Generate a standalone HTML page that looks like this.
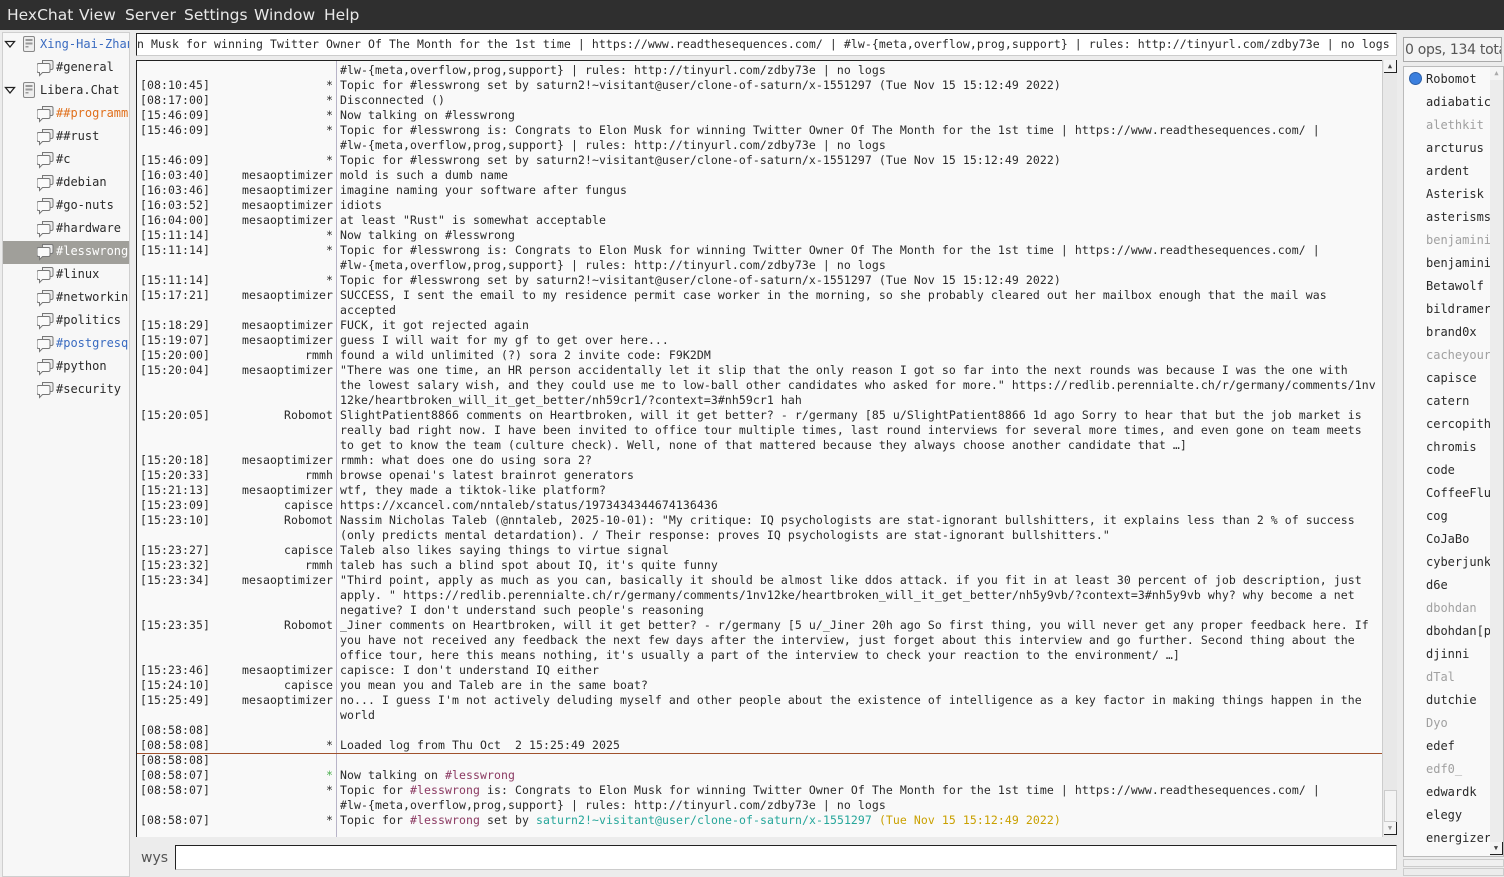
<!DOCTYPE html>
<html><head><meta charset="utf-8">
<style>
*{margin:0;padding:0;box-sizing:border-box}
body{width:1504px;height:877px;background:#ececec;position:relative;overflow:hidden;font-family:"DejaVu Sans Mono","Liberation Mono",monospace;font-size:11.5px;color:#2a2a2a}
.abs{position:absolute}
#menu{left:0;top:0;width:1504px;height:30px;background:#2f2f2f;color:#e8e8e8;font-family:"DejaVu Sans","Liberation Sans",sans-serif;font-size:15.5px;}
#menu span{position:absolute;top:6px}
#tree{left:2px;top:32px;width:128px;height:845px;background:#f7f7f7;border:1px solid #cfcfcf;overflow:hidden}
.ti{position:absolute;height:23px;line-height:23px;white-space:nowrap;font-size:12px}
.ic{position:absolute}
#topic{left:136px;top:33px;width:1261px;height:23px;background:#fff;border:1px solid #222;border-right-color:#ccc;border-bottom-color:#ccc;line-height:21px;white-space:nowrap;overflow:hidden;letter-spacing:0.075px}
#chat{left:136px;top:60px;width:1261px;height:777px;background:#f9f9f9;border:1px solid #222;border-right:none;border-bottom:none;overflow:hidden}
.ln{position:absolute;height:15px;line-height:15px;white-space:pre;letter-spacing:0.075px}
.t{left:3px}
.n{width:196px;left:0;text-align:right}
.m{left:203px}
#sep{left:199px;top:0;width:1px;height:777px;background:#b8b4c8}
#sb{left:1382px;top:60px;width:15px;height:777px;background:#e8e8e8;border-left:1px solid #ccc}
#ulhead{left:1403px;top:37px;width:99px;height:25px;background:#f3f3f3;border:1px solid #aaa;font-family:"DejaVu Sans",sans-serif;font-size:14px;letter-spacing:-0.3px;line-height:24px;color:#555;white-space:nowrap;overflow:hidden;padding-left:1px}
#ul{left:1403px;top:66px;width:101px;height:791px;background:#f9f9f9;border:1px solid #bbb;overflow:hidden;font-size:12px}
.u{position:absolute;left:22px;height:23px;line-height:23px;white-space:nowrap}
.g{color:#a0a0a0}
.p{color:#8b3a62}
</style></head><body>
<div id="menu" class="abs"><span style="left:7px">HexChat</span><span style="left:79px">View</span><span style="left:125px">Server</span><span style="left:184px">Settings</span><span style="left:254px">Window</span><span style="left:324px">Help</span></div>

<svg width="0" height="0" style="position:absolute">
<defs>
<g id="tri"><path d="M1.5 2.5 L10.5 2.5 L6 8 Z" fill="#fff" stroke="#222" stroke-width="1.3"/></g>
<g id="srv"><rect x="1.5" y="0.5" width="11" height="15" rx="1.5" fill="#eee" stroke="#888"/><rect x="3.5" y="3" width="7" height="2" fill="#999"/><rect x="3.5" y="6.5" width="7" height="2" fill="#999"/><rect x="3.5" y="10" width="3" height="1.5" fill="#999"/></g>
<g id="bub"><path d="M5.5 1.5 h9 a1.5 1.5 0 0 1 1.5 1.5 v6 a1.5 1.5 0 0 1 -1.5 1.5 h-9 z" fill="#eee" stroke="#777"/><path d="M1.5 4.5 h10 a1.5 1.5 0 0 1 1.5 1.5 v6 a1.5 1.5 0 0 1 -1.5 1.5 h-6 l-3 3 v-3 h-1 a1.5 1.5 0 0 1 -1.5 -1.5 v-6 a1.5 1.5 0 0 1 1.5 -1.5 z" fill="#fafafa" stroke="#777"/></g>
</defs></svg>

<div id="tree" class="abs">
<div style="position:absolute;left:0;top:208px;width:128px;height:23px;background:#a09f9a"></div>
<svg class="ic" style="left:1px;top:6px" width="12" height="10"><use href="#tri"/></svg><svg class="ic" style="left:19px;top:3px" width="14" height="17"><use href="#srv"/></svg><div class="ti" style="left:37px;top:0;color:#3a6bc0">Xing-Hai-Zhan</div>
<svg class="ic" style="left:34px;top:26px" width="18" height="18"><use href="#bub"/></svg><div class="ti" style="left:53px;top:23px">#general</div>
<svg class="ic" style="left:1px;top:52px" width="12" height="10"><use href="#tri"/></svg><svg class="ic" style="left:19px;top:49px" width="14" height="17"><use href="#srv"/></svg><div class="ti" style="left:37px;top:46px">Libera.Chat</div>
<svg class="ic" style="left:34px;top:72px" width="18" height="18"><use href="#bub"/></svg><div class="ti" style="left:53px;top:69px;color:#e0701c">##programming</div>
<svg class="ic" style="left:34px;top:95px" width="18" height="18"><use href="#bub"/></svg><div class="ti" style="left:53px;top:92px">##rust</div>
<svg class="ic" style="left:34px;top:118px" width="18" height="18"><use href="#bub"/></svg><div class="ti" style="left:53px;top:115px">#c</div>
<svg class="ic" style="left:34px;top:141px" width="18" height="18"><use href="#bub"/></svg><div class="ti" style="left:53px;top:138px">#debian</div>
<svg class="ic" style="left:34px;top:164px" width="18" height="18"><use href="#bub"/></svg><div class="ti" style="left:53px;top:161px">#go-nuts</div>
<svg class="ic" style="left:34px;top:187px" width="18" height="18"><use href="#bub"/></svg><div class="ti" style="left:53px;top:184px">#hardware</div>
<svg class="ic" style="left:34px;top:210px" width="18" height="18"><use href="#bub"/></svg><div class="ti" style="left:53px;top:207px;color:#fff">#lesswrong</div>
<svg class="ic" style="left:34px;top:233px" width="18" height="18"><use href="#bub"/></svg><div class="ti" style="left:53px;top:230px">#linux</div>
<svg class="ic" style="left:34px;top:256px" width="18" height="18"><use href="#bub"/></svg><div class="ti" style="left:53px;top:253px">#networking</div>
<svg class="ic" style="left:34px;top:279px" width="18" height="18"><use href="#bub"/></svg><div class="ti" style="left:53px;top:276px">#politics</div>
<svg class="ic" style="left:34px;top:302px" width="18" height="18"><use href="#bub"/></svg><div class="ti" style="left:53px;top:299px;color:#3a6bc0">#postgresql</div>
<svg class="ic" style="left:34px;top:325px" width="18" height="18"><use href="#bub"/></svg><div class="ti" style="left:53px;top:322px">#python</div>
<svg class="ic" style="left:34px;top:348px" width="18" height="18"><use href="#bub"/></svg><div class="ti" style="left:53px;top:345px">#security</div>
</div>

<div id="topic" class="abs">n Musk for winning Twitter Owner Of The Month for the 1st time | https://www.readthesequences.com/ | #lw-{meta,overflow,prog,support} | rules: http://tinyurl.com/zdby73e | no logs</div>

<div id="chat" class="abs">
<div id="sep" class="abs"></div>
<div style="position:absolute;left:0;top:1px;width:1261px;height:776px">
<div class="ln m" style="top:1px">#lw-{meta,overflow,prog,support} | rules: http://tinyurl.com/zdby73e | no logs</div>
<div class="ln t" style="top:16px">[08:10:45]</div><div class="ln n" style="top:16px">*</div><div class="ln m" style="top:16px">Topic for #lesswrong set by saturn2!~visitant@user/clone-of-saturn/x-1551297 (Tue Nov 15 15:12:49 2022)</div>
<div class="ln t" style="top:31px">[08:17:00]</div><div class="ln n" style="top:31px">*</div><div class="ln m" style="top:31px">Disconnected ()</div>
<div class="ln t" style="top:46px">[15:46:09]</div><div class="ln n" style="top:46px">*</div><div class="ln m" style="top:46px">Now talking on #lesswrong</div>
<div class="ln t" style="top:61px">[15:46:09]</div><div class="ln n" style="top:61px">*</div><div class="ln m" style="top:61px">Topic for #lesswrong is: Congrats to Elon Musk for winning Twitter Owner Of The Month for the 1st time | https://www.readthesequences.com/ |</div>
<div class="ln m" style="top:76px">#lw-{meta,overflow,prog,support} | rules: http://tinyurl.com/zdby73e | no logs</div>
<div class="ln t" style="top:91px">[15:46:09]</div><div class="ln n" style="top:91px">*</div><div class="ln m" style="top:91px">Topic for #lesswrong set by saturn2!~visitant@user/clone-of-saturn/x-1551297 (Tue Nov 15 15:12:49 2022)</div>
<div class="ln t" style="top:106px">[16:03:40]</div><div class="ln n" style="top:106px">mesaoptimizer</div><div class="ln m" style="top:106px">mold is such a dumb name</div>
<div class="ln t" style="top:121px">[16:03:46]</div><div class="ln n" style="top:121px">mesaoptimizer</div><div class="ln m" style="top:121px">imagine naming your software after fungus</div>
<div class="ln t" style="top:136px">[16:03:52]</div><div class="ln n" style="top:136px">mesaoptimizer</div><div class="ln m" style="top:136px">idiots</div>
<div class="ln t" style="top:151px">[16:04:00]</div><div class="ln n" style="top:151px">mesaoptimizer</div><div class="ln m" style="top:151px">at least "Rust" is somewhat acceptable</div>
<div class="ln t" style="top:166px">[15:11:14]</div><div class="ln n" style="top:166px">*</div><div class="ln m" style="top:166px">Now talking on #lesswrong</div>
<div class="ln t" style="top:181px">[15:11:14]</div><div class="ln n" style="top:181px">*</div><div class="ln m" style="top:181px">Topic for #lesswrong is: Congrats to Elon Musk for winning Twitter Owner Of The Month for the 1st time | https://www.readthesequences.com/ |</div>
<div class="ln m" style="top:196px">#lw-{meta,overflow,prog,support} | rules: http://tinyurl.com/zdby73e | no logs</div>
<div class="ln t" style="top:211px">[15:11:14]</div><div class="ln n" style="top:211px">*</div><div class="ln m" style="top:211px">Topic for #lesswrong set by saturn2!~visitant@user/clone-of-saturn/x-1551297 (Tue Nov 15 15:12:49 2022)</div>
<div class="ln t" style="top:226px">[15:17:21]</div><div class="ln n" style="top:226px">mesaoptimizer</div><div class="ln m" style="top:226px">SUCCESS, I sent the email to my residence permit case worker in the morning, so she probably cleared out her mailbox enough that the mail was</div>
<div class="ln m" style="top:241px">accepted</div>
<div class="ln t" style="top:256px">[15:18:29]</div><div class="ln n" style="top:256px">mesaoptimizer</div><div class="ln m" style="top:256px">FUCK, it got rejected again</div>
<div class="ln t" style="top:271px">[15:19:07]</div><div class="ln n" style="top:271px">mesaoptimizer</div><div class="ln m" style="top:271px">guess I will wait for my gf to get over here...</div>
<div class="ln t" style="top:286px">[15:20:00]</div><div class="ln n" style="top:286px">rmmh</div><div class="ln m" style="top:286px">found a wild unlimited (?) sora 2 invite code: F9K2DM</div>
<div class="ln t" style="top:301px">[15:20:04]</div><div class="ln n" style="top:301px">mesaoptimizer</div><div class="ln m" style="top:301px">"There was one time, an HR person accidentally let it slip that the only reason I got so far into the next rounds was because I was the one with</div>
<div class="ln m" style="top:316px">the lowest salary wish, and they could use me to low-ball other candidates who asked for more." https://redlib.perennialte.ch/r/germany/comments/1nv</div>
<div class="ln m" style="top:331px">12ke/heartbroken_will_it_get_better/nh59cr1/?context=3#nh59cr1 hah</div>
<div class="ln t" style="top:346px">[15:20:05]</div><div class="ln n" style="top:346px">Robomot</div><div class="ln m" style="top:346px">SlightPatient8866 comments on Heartbroken, will it get better? - r/germany [85 u/SlightPatient8866 1d ago Sorry to hear that but the job market is</div>
<div class="ln m" style="top:361px">really bad right now. I have been invited to office tour multiple times, last round interviews for several more times, and even gone on team meets</div>
<div class="ln m" style="top:376px">to get to know the team (culture check). Well, none of that mattered because they always choose another candidate that …]</div>
<div class="ln t" style="top:391px">[15:20:18]</div><div class="ln n" style="top:391px">mesaoptimizer</div><div class="ln m" style="top:391px">rmmh: what does one do using sora 2?</div>
<div class="ln t" style="top:406px">[15:20:33]</div><div class="ln n" style="top:406px">rmmh</div><div class="ln m" style="top:406px">browse openai's latest brainrot generators</div>
<div class="ln t" style="top:421px">[15:21:13]</div><div class="ln n" style="top:421px">mesaoptimizer</div><div class="ln m" style="top:421px">wtf, they made a tiktok-like platform?</div>
<div class="ln t" style="top:436px">[15:23:09]</div><div class="ln n" style="top:436px">capisce</div><div class="ln m" style="top:436px">https://xcancel.com/nntaleb/status/1973434344674136436</div>
<div class="ln t" style="top:451px">[15:23:10]</div><div class="ln n" style="top:451px">Robomot</div><div class="ln m" style="top:451px">Nassim Nicholas Taleb (@nntaleb, 2025-10-01): "My critique: IQ psychologists are stat-ignorant bullshitters, it explains less than 2 % of success</div>
<div class="ln m" style="top:466px">(only predicts mental detardation). / Their response: proves IQ psychologists are stat-ignorant bullshitters."</div>
<div class="ln t" style="top:481px">[15:23:27]</div><div class="ln n" style="top:481px">capisce</div><div class="ln m" style="top:481px">Taleb also likes saying things to virtue signal</div>
<div class="ln t" style="top:496px">[15:23:32]</div><div class="ln n" style="top:496px">rmmh</div><div class="ln m" style="top:496px">taleb has such a blind spot about IQ, it's quite funny</div>
<div class="ln t" style="top:511px">[15:23:34]</div><div class="ln n" style="top:511px">mesaoptimizer</div><div class="ln m" style="top:511px">"Third point, apply as much as you can, basically it should be almost like ddos attack. if you fit in at least 30 percent of job description, just</div>
<div class="ln m" style="top:526px">apply. " https://redlib.perennialte.ch/r/germany/comments/1nv12ke/heartbroken_will_it_get_better/nh5y9vb/?context=3#nh5y9vb why? why become a net</div>
<div class="ln m" style="top:541px">negative? I don't understand such people's reasoning</div>
<div class="ln t" style="top:556px">[15:23:35]</div><div class="ln n" style="top:556px">Robomot</div><div class="ln m" style="top:556px">_Jiner comments on Heartbroken, will it get better? - r/germany [5 u/_Jiner 20h ago So first thing, you will never get any proper feedback here. If</div>
<div class="ln m" style="top:571px">you have not received any feedback the next few days after the interview, just forget about this interview and go further. Second thing about the</div>
<div class="ln m" style="top:586px">office tour, here this means nothing, it's usually a part of the interview to check your reaction to the environment/ …]</div>
<div class="ln t" style="top:601px">[15:23:46]</div><div class="ln n" style="top:601px">mesaoptimizer</div><div class="ln m" style="top:601px">capisce: I don't understand IQ either</div>
<div class="ln t" style="top:616px">[15:24:10]</div><div class="ln n" style="top:616px">capisce</div><div class="ln m" style="top:616px">you mean you and Taleb are in the same boat?</div>
<div class="ln t" style="top:631px">[15:25:49]</div><div class="ln n" style="top:631px">mesaoptimizer</div><div class="ln m" style="top:631px">no... I guess I'm not actively deluding myself and other people about the existence of intelligence as a key factor in making things happen in the</div>
<div class="ln m" style="top:646px">world</div>
<div class="ln t" style="top:661px">[08:58:08]</div>
<div class="ln t" style="top:676px">[08:58:08]</div><div class="ln n" style="top:676px">*</div><div class="ln m" style="top:676px">Loaded log from Thu Oct  2 15:25:49 2025</div>
<div class="abs" style="left:0;top:691px;width:1245px;height:1px;background:#a0522d"></div>
<div class="ln t" style="top:691px">[08:58:08]</div>
<div class="ln t" style="top:706px">[08:58:07]</div><div class="ln n" style="top:706px;color:#4caf50">*</div><div class="ln m" style="top:706px">Now talking on <span class="p">#lesswrong</span></div>
<div class="ln t" style="top:721px">[08:58:07]</div><div class="ln n" style="top:721px">*</div><div class="ln m" style="top:721px">Topic for <span class="p">#lesswrong</span> is: Congrats to Elon Musk for winning Twitter Owner Of The Month for the 1st time | https://www.readthesequences.com/ |</div>
<div class="ln m" style="top:736px">#lw-{meta,overflow,prog,support} | rules: http://tinyurl.com/zdby73e | no logs</div>
<div class="ln t" style="top:751px">[08:58:07]</div><div class="ln n" style="top:751px">*</div><div class="ln m" style="top:751px">Topic for <span class="p">#lesswrong</span> set by <span style="color:#26a69a">saturn2!~visitant@user/clone-of-saturn/x-1551297</span> <span style="color:#c9a000">(Tue Nov 15 15:12:49 2022)</span></div>
</div>
</div>
<div id="sb" class="abs">
<div class="abs" style="left:1px;top:0;width:13px;height:13px;background:#f4f4f4;border-bottom:1px solid #222;border-right:1px solid #222;font-size:7px;text-align:center;line-height:12px;color:#444">▲</div>
<div class="abs" style="left:1px;top:730px;width:13px;height:32px;background:#f4f4f4;border:1px solid #ccc"></div>
<div class="abs" style="left:1px;top:762px;width:13px;height:13px;background:#f4f4f4;border-right:1px solid #222;border-bottom:1px solid #222;font-size:7px;text-align:center;line-height:12px;color:#999">▼</div>
</div>

<div class="abs" style="left:136px;top:840px;width:1261px;height:37px;background:#ececec"></div>
<div class="abs" style="left:141px;top:850px;font-family:'DejaVu Sans',sans-serif;font-size:14px;color:#555">wys</div>
<div class="abs" style="left:175px;top:845px;width:1222px;height:25px;background:#fff;border:1px solid #222;border-right-color:#ccc;border-bottom-color:#ccc"></div>

<div class="abs" style="left:1400px;top:30px;width:104px;height:847px;background:#ececec"></div>
<div id="ulhead" class="abs">0 ops, 134 total</div>
<div id="ul" class="abs">
<div class="abs" style="left:5px;top:5px;width:13px;height:13px;border-radius:50%;background:#3b7fde;border:1px solid #2c5fa8"></div>
<div class="u" style="top:1px">Robomot</div>
<div class="u" style="top:24px">adiabatic</div>
<div class="u g" style="top:47px">alethkit</div>
<div class="u" style="top:70px">arcturus</div>
<div class="u" style="top:93px">ardent</div>
<div class="u" style="top:116px">Asterisk</div>
<div class="u" style="top:139px">asterisms</div>
<div class="u g" style="top:162px">benjamini</div>
<div class="u" style="top:185px">benjamini</div>
<div class="u" style="top:208px">Betawolf</div>
<div class="u" style="top:231px">bildramer</div>
<div class="u" style="top:254px">brand0x</div>
<div class="u g" style="top:277px">cacheyour</div>
<div class="u" style="top:300px">capisce</div>
<div class="u" style="top:323px">catern</div>
<div class="u" style="top:346px">cercopith</div>
<div class="u" style="top:369px">chromis</div>
<div class="u" style="top:392px">code</div>
<div class="u" style="top:415px">CoffeeFlu</div>
<div class="u" style="top:438px">cog</div>
<div class="u" style="top:461px">CoJaBo</div>
<div class="u" style="top:484px">cyberjunk</div>
<div class="u" style="top:507px">d6e</div>
<div class="u g" style="top:530px">dbohdan</div>
<div class="u" style="top:553px">dbohdan[p</div>
<div class="u" style="top:576px">djinni</div>
<div class="u g" style="top:599px">dTal</div>
<div class="u" style="top:622px">dutchie</div>
<div class="u g" style="top:645px">Dyo</div>
<div class="u" style="top:668px">edef</div>
<div class="u g" style="top:691px">edf0_</div>
<div class="u" style="top:714px">edwardk</div>
<div class="u" style="top:737px">elegy</div>
<div class="u" style="top:760px">energizer</div>
<div class="abs" style="left:86px;top:0;width:13px;height:791px;background:#ececec"></div>
<div class="abs" style="left:86px;top:0;width:13px;height:13px;background:#f4f4f4;font-size:7px;text-align:center;line-height:12px;color:#aaa">▲</div>
<div class="abs" style="left:86px;top:775px;width:13px;height:13px;background:#f4f4f4;border-right:1px solid #222;border-bottom:1px solid #222;font-size:7px;text-align:center;line-height:12px;color:#444">▼</div>
</div>
<div class="abs" style="left:1403px;top:859px;width:101px;height:8px;border:1px solid #ccc;background:#f0f0f0"></div>
<div class="abs" style="left:1403px;top:868px;width:101px;height:8px;border:1px solid #ccc;background:#ececec"></div>
</body></html>
